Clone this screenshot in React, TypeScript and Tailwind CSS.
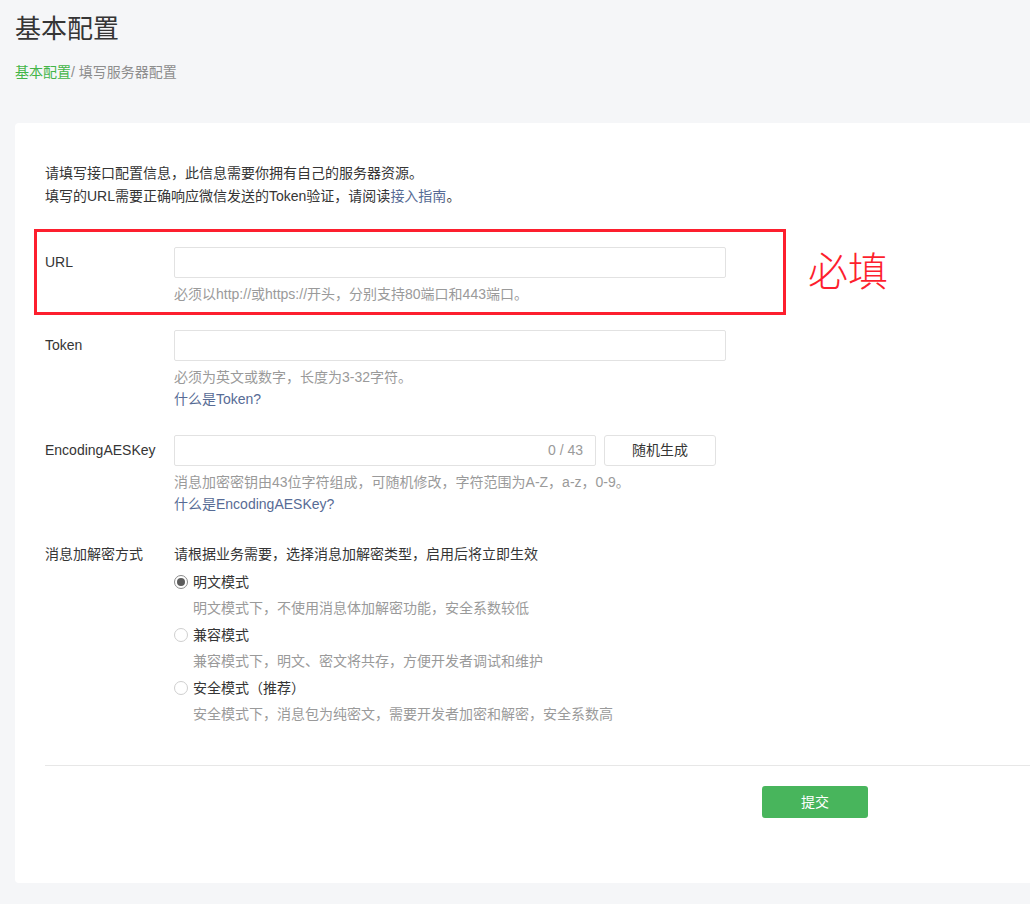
import { useState } from "react";

const font = {
  fontFamily: '"Liberation Sans", "Noto Sans CJK SC", sans-serif',
};

function Radio({ checked }: { checked: boolean }) {
  return (
    <span
      className={`w-[14px] h-[14px] rounded-full border flex items-center justify-center bg-white shrink-0 ${
        checked ? "border-[#8a8a8a]" : "border-[#cfcfcf]"
      }`}
    >
      {checked && <span className="w-[8px] h-[8px] rounded-full bg-[#5c5c5c]" />}
    </span>
  );
}

const modes = [
  { name: "明文模式", desc: "明文模式下，不使用消息体加解密功能，安全系数较低" },
  { name: "兼容模式", desc: "兼容模式下，明文、密文将共存，方便开发者调试和维护" },
  { name: "安全模式（推荐）", desc: "安全模式下，消息包为纯密文，需要开发者加密和解密，安全系数高" },
];

export default function App() {
  const [mode, setMode] = useState(0);

  return (
    <div className="w-full min-h-[904px] bg-[#f5f6f8] overflow-hidden text-[#353535]" style={font}>
      {/* Header */}
      <div className="pl-[15px] pt-[12px]">
        <h1 className="text-[26px] leading-[34px] text-[#353535]">基本配置</h1>
        <p className="mt-[16px] text-[14px] leading-[20px] text-[#8d8d8d]">
          <span className="text-[#44b549]">基本配置</span>/ 填写服务器配置
        </p>
      </div>

      {/* Card */}
      <div className="ml-[15px] mt-[41px] w-[1100px] bg-white rounded-[4px] pl-[30px] pt-[39px] pb-[65px] text-[14px]">
        <div className="leading-[23px]">
          <p>请填写接口配置信息，此信息需要你拥有自己的服务器资源。</p>
          <p>
            填写的URL需要正确响应微信发送的Token验证，请阅读
            <a className="text-[#576b95]">接入指南</a>。
          </p>
        </div>

        {/* URL */}
        <div className="relative mt-[39px] flex">
          <div className="w-[129px] h-[31px] leading-[31px]">URL</div>
          <div>
            <div className="w-[552px] h-[31px] border border-[#e2e2e2] rounded-[2px]" />
            <p className="mt-[5px] leading-[22px] text-[#9a9a9a]">
              必须以http://或https://开头，分别支持80端口和443端口。
            </p>
          </div>
          <div className="absolute left-[-11px] top-[-18px] w-[752px] h-[86px] border-[3px] border-[#fd1f2e] pointer-events-none" />
          <div className="absolute left-[763px] top-[0px] text-[40px] leading-[50px] font-light text-[#fd1f2e]">必填</div>
        </div>

        {/* Token */}
        <div className="mt-[25px] flex">
          <div className="w-[129px] h-[31px] leading-[31px]">Token</div>
          <div>
            <div className="w-[552px] h-[31px] border border-[#e2e2e2] rounded-[2px]" />
            <p className="mt-[5px] leading-[22px] text-[#9a9a9a]">必须为英文或数字，长度为3-32字符。</p>
            <a className="block leading-[22px] text-[#576b95]">什么是Token?</a>
          </div>
        </div>

        {/* EncodingAESKey */}
        <div className="mt-[25px] flex">
          <div className="w-[129px] h-[31px] leading-[31px]">EncodingAESKey</div>
          <div>
            <div className="flex gap-[8px]">
              <div className="w-[422px] h-[31px] border border-[#e2e2e2] rounded-[2px] flex items-center justify-end pr-[12px] text-[#9a9a9a]">
                0 / 43
              </div>
              <button className="w-[112px] h-[31px] border border-[#e2e2e2] rounded-[3px] bg-white text-[#353535]">
                随机生成
              </button>
            </div>
            <p className="mt-[5px] leading-[22px] text-[#9a9a9a]">
              消息加密密钥由43位字符组成，可随机修改，字符范围为A-Z，a-z，0-9。
            </p>
            <a className="block leading-[22px] text-[#576b95]">什么是EncodingAESKey?</a>
          </div>
        </div>

        {/* Mode */}
        <div className="mt-[28px] flex">
          <div className="w-[129px] leading-[22px]">消息加解密方式</div>
          <div>
            <p className="leading-[22px]">请根据业务需要，选择消息加解密类型，启用后将立即生效</p>
            <div className="mt-[4px]">
              {modes.map((m, i) => (
                <div key={m.name}>
                  <label
                    className="flex items-center gap-[5px] h-[26px] cursor-pointer"
                    onClick={() => setMode(i)}
                  >
                    <Radio checked={mode === i} />
                    <span>{m.name}</span>
                  </label>
                  <p className="pl-[19px] h-[27px] leading-[27px] text-[#9a9a9a]">{m.desc}</p>
                </div>
              ))}
            </div>
          </div>
        </div>

        {/* Footer */}
        <div className="mt-[37px] border-t border-[#e7e7e7]" />
        <button className="mt-[20px] ml-[717px] w-[106px] h-[32px] rounded-[3px] bg-[#48b55c] text-white">
          提交
        </button>
      </div>
    </div>
  );
}
